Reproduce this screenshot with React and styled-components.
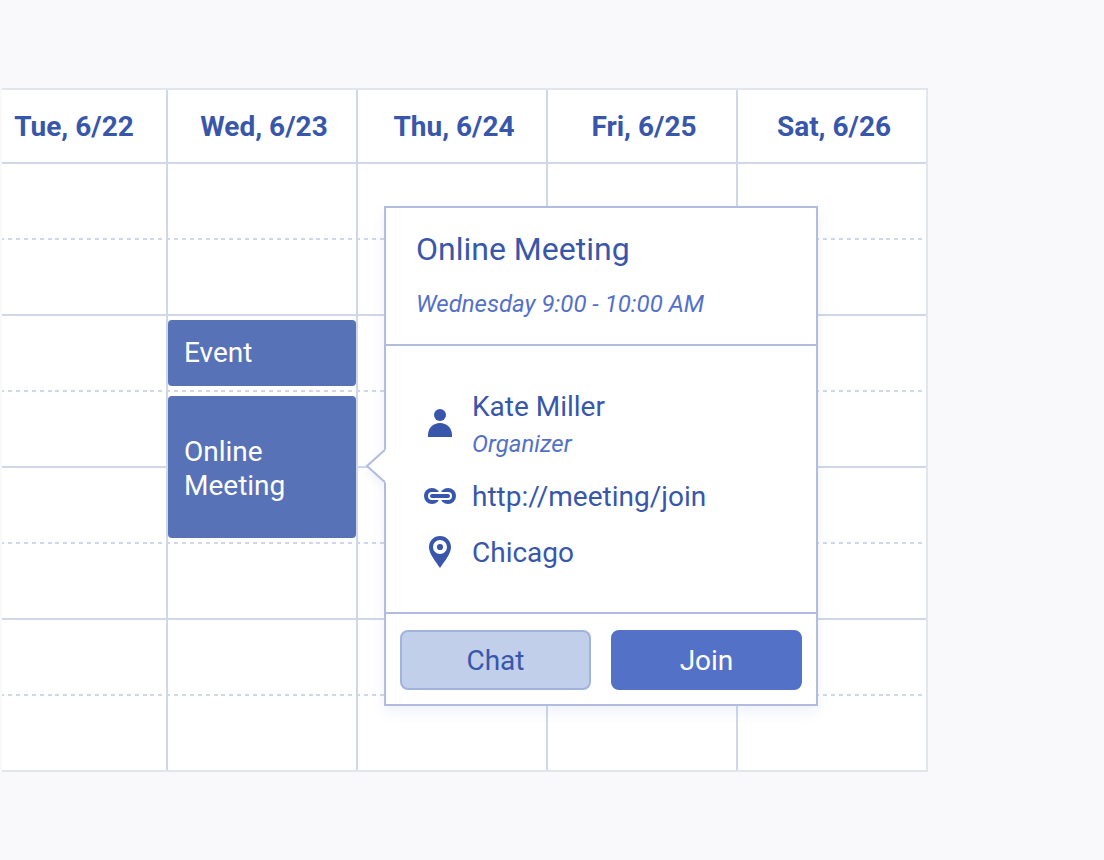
import React from "react";
import styled, { createGlobalStyle } from "styled-components";

const days = ["Tue, 6/22", "Wed, 6/23", "Thu, 6/24", "Fri, 6/25", "Sat, 6/26"];

const events = [
  { title: "Event", slots: 1 },
  { title: "Online Meeting", slots: 2 },
];

const PersonIcon = () => (
  <Icon viewBox="0 0 32 32" fill="currentColor">
    <circle cx="16" cy="8" r="6" />
    <path d="M4 30V28C4 21.200 9 16 16 16s12 5.200 12 12v2z" />
  </Icon>
);

const LinkIcon = () => (
  <Icon viewBox="0 0 32 32" fill="currentColor">
    <circle cx="8" cy="16" r="8" />
    <circle cx="24" cy="16" r="8" />
    <rect x="4" y="12" width="24" height="8" rx="4" fill="#fff" />
    <rect x="6" y="14" width="20" height="4" rx="2" />
  </Icon>
);

const PinIcon = () => (
  <Icon viewBox="0 0 32 32" fill="currentColor">
    <path
      fillRule="evenodd"
      d="M16 0C9.900 0 5 4.900 5 11c0 7 6.500 14 11 21 4.500-7 11-14 11-21 0-6.100-4.900-11-11-11zm0 4a7 7 0 1 1 0 14 7 7 0 0 1 0-14z"
    />
    <circle cx="16" cy="11" r="3.100" />
  </Icon>
);

export default function App() {
  return (
    <Page>
      <GlobalStyle />
      <Calendar>
        {days.map((day, i) => (
          <Day key={day} $first={i === 0} $last={i === days.length - 1}>
            <DayName>{day}</DayName>
            <Slots>
              {day.startsWith("Wed") &&
                events.map((event) => (
                  <Event key={event.title} $slots={event.slots}>
                    <EventTitle>{event.title}</EventTitle>
                  </Event>
                ))}
            </Slots>
          </Day>
        ))}
      </Calendar>

      <Popup>
        <Arrow width="22" height="36" viewBox="0 0 22 36">
          <path d="M22 1.500H20.500L2 18l18.500 16.500H22z" fill="#fff" />
          <path d="M21 1.800L3 18l18 16.200" fill="none" stroke="#b0bce0" strokeWidth="2" />
        </Arrow>
        <PopupHeader>
          <Title>Online Meeting</Title>
          <Time>Wednesday 9:00 - 10:00 AM</Time>
        </PopupHeader>
        <Details>
          <Detail>
            <PersonIcon />
            <div>
              <Text>Kate Miller</Text>
              <Role>Organizer</Role>
            </div>
          </Detail>
          <Detail>
            <LinkIcon />
            <Text>http://meeting/join</Text>
          </Detail>
          <Detail>
            <PinIcon />
            <Text>Chicago</Text>
          </Detail>
        </Details>
        <Actions>
          <Button>Chat</Button>
          <Button $primary>Join</Button>
        </Actions>
      </Popup>
    </Page>
  );
}

const GlobalStyle = createGlobalStyle`
  * {
    box-sizing: border-box;
  }
  body {
    margin: 0;
    background: #f9f9fc;
    font-family: Roboto, "Liberation Sans", sans-serif;
    color: #3857ab;
  }
  h2, p {
    margin: 0;
    font-weight: 400;
  }
`;

const Page = styled.main`
  position: relative;
  width: 1104px;
  height: 860px;
  padding: 88px 0 0 2px;
  overflow: hidden;
`;

const Calendar = styled.div`
  display: flex;
  width: 926px;
  height: 684px;
  background: #fff;
  border: 2px solid #e1e5ed;
  border-left: 0;
`;

const Day = styled.section`
  display: flex;
  flex-direction: column;
  width: ${(props) => (props.$first ? 166 : props.$last ? 188 : 190)}px;
  border-right: ${(props) => (props.$last ? "0" : "2px solid #d0d7eb")};
  ${(props) => props.$first && "& > h2 { padding-right: 24px; }"}
`;

const DayName = styled.h2`
  && {
    font-weight: 700;
  }
  height: 74px;
  padding-left: 4px;
  border-bottom: 2px solid #d0d7eb;
  font-size: 28px;
  line-height: 73px;
  text-align: center;
  white-space: nowrap;
`;

/* a solid line every hour with a dashed one at each half */
const Slots = styled.div`
  flex: 1;
  display: flex;
  flex-direction: column;
  gap: 10px;
  padding-top: 156px;
  background:
    repeating-linear-gradient(transparent 0 150px, #d0d7eb 150px 152px),
    repeating-linear-gradient(#fff 0 74px, transparent 74px 76px, #fff 76px 152px),
    repeating-linear-gradient(90deg, #d0d7eb 0 2px, #fff 2px 5.917px, #d0d7eb 5.917px 7.917px);
`;

const Event = styled.article`
  display: flex;
  align-items: center;
  height: ${(props) => props.$slots * 76 - 10}px;
  padding: ${(props) => (props.$slots > 1 ? "4px 16px 0" : "0 16px")};
  border-radius: 4px;
  background: #5872b7;
  color: #fff;
`;

const EventTitle = styled.p`
  width: 120px;
  font-size: 28px;
  line-height: 34px;
`;

const Popup = styled.div`
  position: absolute;
  left: 384px;
  top: 206px;
  display: flex;
  flex-direction: column;
  width: 434px;
  height: 500px;
  background: #fff;
  border: 2px solid #b0bce0;
  box-shadow: 0 6px 12px rgba(84, 113, 200, 0.09);
`;

const Arrow = styled.svg`
  position: absolute;
  left: -22px;
  top: 240px;
  filter: drop-shadow(-1px 4px 4px rgba(84, 113, 200, 0.08));
  /* keeps the shadow off the popup itself */
  clip-path: inset(-12px 0 -12px -12px);
`;

const PopupHeader = styled.header`
  height: 138px;
  padding: 21px 30px 0;
  border-bottom: 2px solid #b0bce0;
`;

const Title = styled.h2`
  font-size: 32px;
  line-height: 40px;
`;

const Time = styled.p`
  margin-top: 20px;
  font-size: 24px;
  font-style: italic;
  line-height: 30px;
  color: #5471c8;
`;

const Details = styled.div`
  display: flex;
  flex-direction: column;
  gap: 20px;
  height: 268px;
  padding: 43px 38px 0;
  border-bottom: 2px solid #b0bce0;
`;

const Detail = styled.div`
  display: flex;
  align-items: center;
  gap: 16px;
`;

const Icon = styled.svg`
  width: 32px;
  height: 32px;
  margin-bottom: 2px;
`;

const Text = styled.p`
  font-size: 28px;
  line-height: 36px;
`;

const Role = styled.p`
  margin-top: 4px;
  font-size: 24px;
  font-style: italic;
  line-height: 30px;
  color: #5471c8;
`;

const Actions = styled.footer`
  display: flex;
  gap: 20px;
  padding: 16px 14px 14px;
`;

const Button = styled.button`
  flex: 1;
  height: 60px;
  padding: 0;
  border: 2px solid ${(props) => (props.$primary ? "#5471c8" : "#a1b2de")};
  border-radius: 8px;
  background: ${(props) => (props.$primary ? "#5471c8" : "#c1cfea")};
  color: ${(props) => (props.$primary ? "#fff" : "#3857ab")};
  font-family: inherit;
  font-size: 28px;
`;
